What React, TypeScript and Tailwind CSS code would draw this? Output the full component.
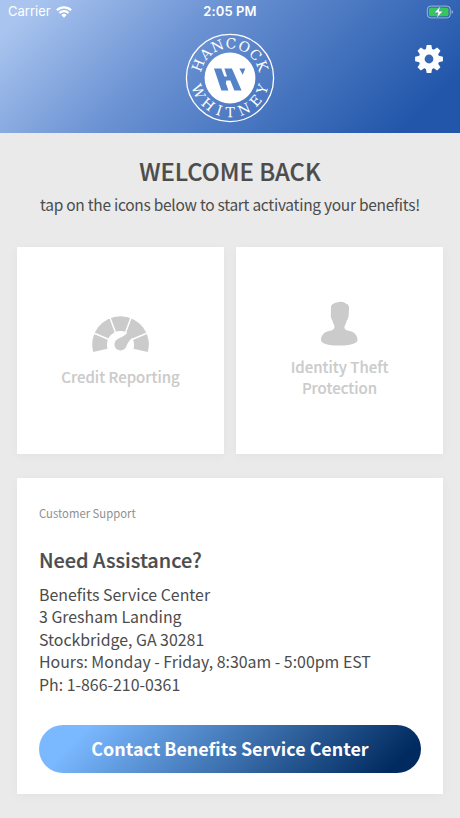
import { type ReactNode } from 'react';

const supportLines = [
  'Benefits Service Center',
  '3 Gresham Landing',
  'Stockbridge, GA 30281',
  'Hours: Monday - Friday, 8:30am - 5:00pm EST',
  'Ph: 1-866-210-0361',
];

function WifiIcon() {
  return (
    <svg viewBox="0 0 16 12" className="h-3 w-4" fill="none" stroke="white" strokeWidth="2.3">
      <path d="M0.9 4.3a10 10 0 0 1 14.2 0" />
      <path d="M3.4 7a6.5 6.5 0 0 1 9.2 0" />
      <path d="M8 11.8 5.3 9a3.8 3.8 0 0 1 5.4 0z" fill="white" stroke="none" />
    </svg>
  );
}

function BatteryIcon() {
  return (
    <svg viewBox="0 0 28 14" className="h-3.5 w-7">
      <rect x="1.3" y="1.1" width="23" height="11.8" rx="3.4" fill="none" stroke="white" strokeOpacity="0.5" />
      <rect x="2.9" y="2.7" width="19.6" height="8.6" rx="1.8" fill="#35c759" />
      <path d="M25.6 5.3v3.6c1-.4 1.4-1 1.4-1.8s-.4-1.4-1.4-1.8z" fill="white" fillOpacity="0.5" />
      <path d="M14.6.9 8 7.8h4l-1.5 5.5 6.7-7.2h-4z" fill="white" stroke="#4c7fb0" strokeWidth="0.6" />
    </svg>
  );
}

function GearIcon() {
  return (
    <svg viewBox="-14 -14 28 28" className="h-7 w-7" fill="white">
      {[0, 45, 90, 135].map((angle) => (
        <path key={angle} d="M-2.3-13.9h4.6l.9 4.4V9.5l-.9 4.4h-4.6l-.9-4.4V-9.5z" transform={`rotate(${angle})`} />
      ))}
      <circle r="10.4" />
      <circle r="4.4" fill="#3766b2" />
    </svg>
  );
}

function BankLogo() {
  return (
    <svg viewBox="-45 -45 90 90" className="h-[90px] w-[90px]" fill="white">
      <defs>
        <path id="arc-top" d="M-29.1 2a29.2 29.2 0 1 1 58.2 0" />
        <path id="arc-bottom" d="M-39.2 0a39.2 39.2 0 0 0 78.4 0" />
      </defs>
      <circle r="43.6" fill="none" stroke="white" strokeWidth="1.3" />
      <circle r="25.4" />
      <g fontFamily="'DejaVu Serif', serif" fontSize="14" textAnchor="middle">
        <text>
          <textPath href="#arc-top" startOffset="50%" textLength="82">HANCOCK</textPath>
        </text>
        <text>
          <textPath href="#arc-bottom" startOffset="50%" textLength="106">WHITNEY</textPath>
        </text>
      </g>
      <g fill="#5583c8">
        <path d="M-16-9.6h7.3l3 8h2.7l-2.6-8h7.5L11.6 12.6H4.3L.4 2.6H-3.6L-4.2 5-1.6 12.6h-7z" />
        <path d="M9.4-9.6h5.9l-2.6 6.4z" />
      </g>
    </svg>
  );
}

function GaugeIcon() {
  return (
    <svg viewBox="-28.5 -28.5 58 36" className="mt-[2px] mb-[14px] h-9 w-[58px]">
      <path d="M-27.3 7.5A28.3 28.3 0 1 1 27.3 7.5L13 4.2A13.6 13.6 0 1 0-13 4.2z" fill="#cbcbcb" />
      <path d="M-11.5-5-28-12M-4.8-11.5-11-28M4.8-11.5 11-28M11.5-5 28-12" stroke="white" strokeWidth="1.5" />
      <path d="M-3.5-5C0-7.5 3-7.5 6-11L21-20 13-7.5C9-4.5 7.5-2 5 3z" fill="#cbcbcb" />
      <circle r="6.1" fill="#cbcbcb" />
    </svg>
  );
}

function PersonIcon() {
  return (
    <svg viewBox="0 0 38 45" className="-mt-[3px] mb-2.5 h-[45px] w-[38px] -translate-x-px" fill="#cbcbcb">
      <path d="M11 8C10.5 4 13 2 17 1.5c3-1.5 8-.5 9 1.3 3 .7 3.3 3 2.9 6.2L28.6 15c-.2 2-.8 3-1.6 4-.6 3-2 5-2.5 6.5-.5 3 2 4 5 4.5 5.5 1 8 5 8 9 0 3.5-7 5.5-18.5 5.5S1 42.5 1 39c0-4 2.5-8 8-9 3-.5 5.5-1.5 5.5-4.5-.5-2-1.5-3.5-2.3-6.5-1-1-1.500-3-1.400-5z" />
    </svg>
  );
}

function BenefitCard({ icon, children }: { icon: ReactNode; children: ReactNode }) {
  return (
    <button className="flex h-[207px] flex-1 flex-col items-center justify-center bg-white text-[15px] leading-[21px] font-medium text-[#cbcbcb] shadow-[0_2px_10px_rgba(0,0,0,0.04)] [-webkit-text-stroke:0.15px]">
      {icon}
      <span className="whitespace-pre-line">{children}</span>
    </button>
  );
}

export default function App() {
  return (
    <div className="h-[818px] w-[460px] overflow-hidden bg-[#eaeaea] font-['Noto_Sans_CJK_SC',sans-serif] text-[#4c4c4c]">
      <header className="h-[133px] bg-[linear-gradient(135deg,#a9c4ef_6%,#6d94d4_37%,#2156aa_90%)] text-white">
        <div className="grid h-6 grid-cols-3 items-center px-2 font-['Inter',sans-serif] text-[13px]">
          <div className="flex items-center gap-[5px]">
            <span>Carrier</span>
            <WifiIcon />
          </div>
          <span className="text-center font-semibold tracking-[0.1px]">2:05 PM</span>
          <div className="-mr-0.5 flex justify-end">
            <BatteryIcon />
          </div>
        </div>
        <div className="grid grid-cols-3 px-[17px]">
          <span />
          <div className="flex justify-center pt-[9px]">
            <BankLogo />
          </div>
          <div className="flex justify-end pt-[21px]">
            <GearIcon />
          </div>
        </div>
      </header>

      <main className="px-[17px]">
        <div className="pt-5 text-center">
          <h1 className="text-[23.8px] leading-9 font-medium [-webkit-text-stroke:0.2px]">WELCOME BACK</h1>
          <p className="mt-[3px] text-[15.5px] leading-6 tracking-[-0.27px]">
            tap on the icons below to start activating your benefits!
          </p>
        </div>

        <div className="mt-[31px] flex gap-3">
          <BenefitCard icon={<GaugeIcon />}>Credit Reporting</BenefitCard>
          <BenefitCard icon={<PersonIcon />}>{'Identity Theft\nProtection'}</BenefitCard>
        </div>

        <section className="mt-6 h-[316px] bg-white px-[22px] pt-[26px] shadow-[0_2px_10px_rgba(0,0,0,0.04)]">
          <p className="text-[11.3px] leading-[18px] text-[#8f8f8f]">Customer Support</p>
          <h2 className="mt-[22px] text-[19.9px] leading-8 font-medium [-webkit-text-stroke:0.2px]">Need Assistance?</h2>
          <div className="mt-2 text-[15.9px] leading-[22.4px]">
            {supportLines.map((line) => (
              <p key={line}>{line}</p>
            ))}
          </div>
          <button className="mt-[29px] h-12 w-full rounded-full bg-[linear-gradient(135deg,#7ab8ff_12%,#012b60_92%)] pb-0.5 text-[17.9px] font-bold text-white">
            Contact Benefits Service Center
          </button>
        </section>
      </main>
    </div>
  );
}
